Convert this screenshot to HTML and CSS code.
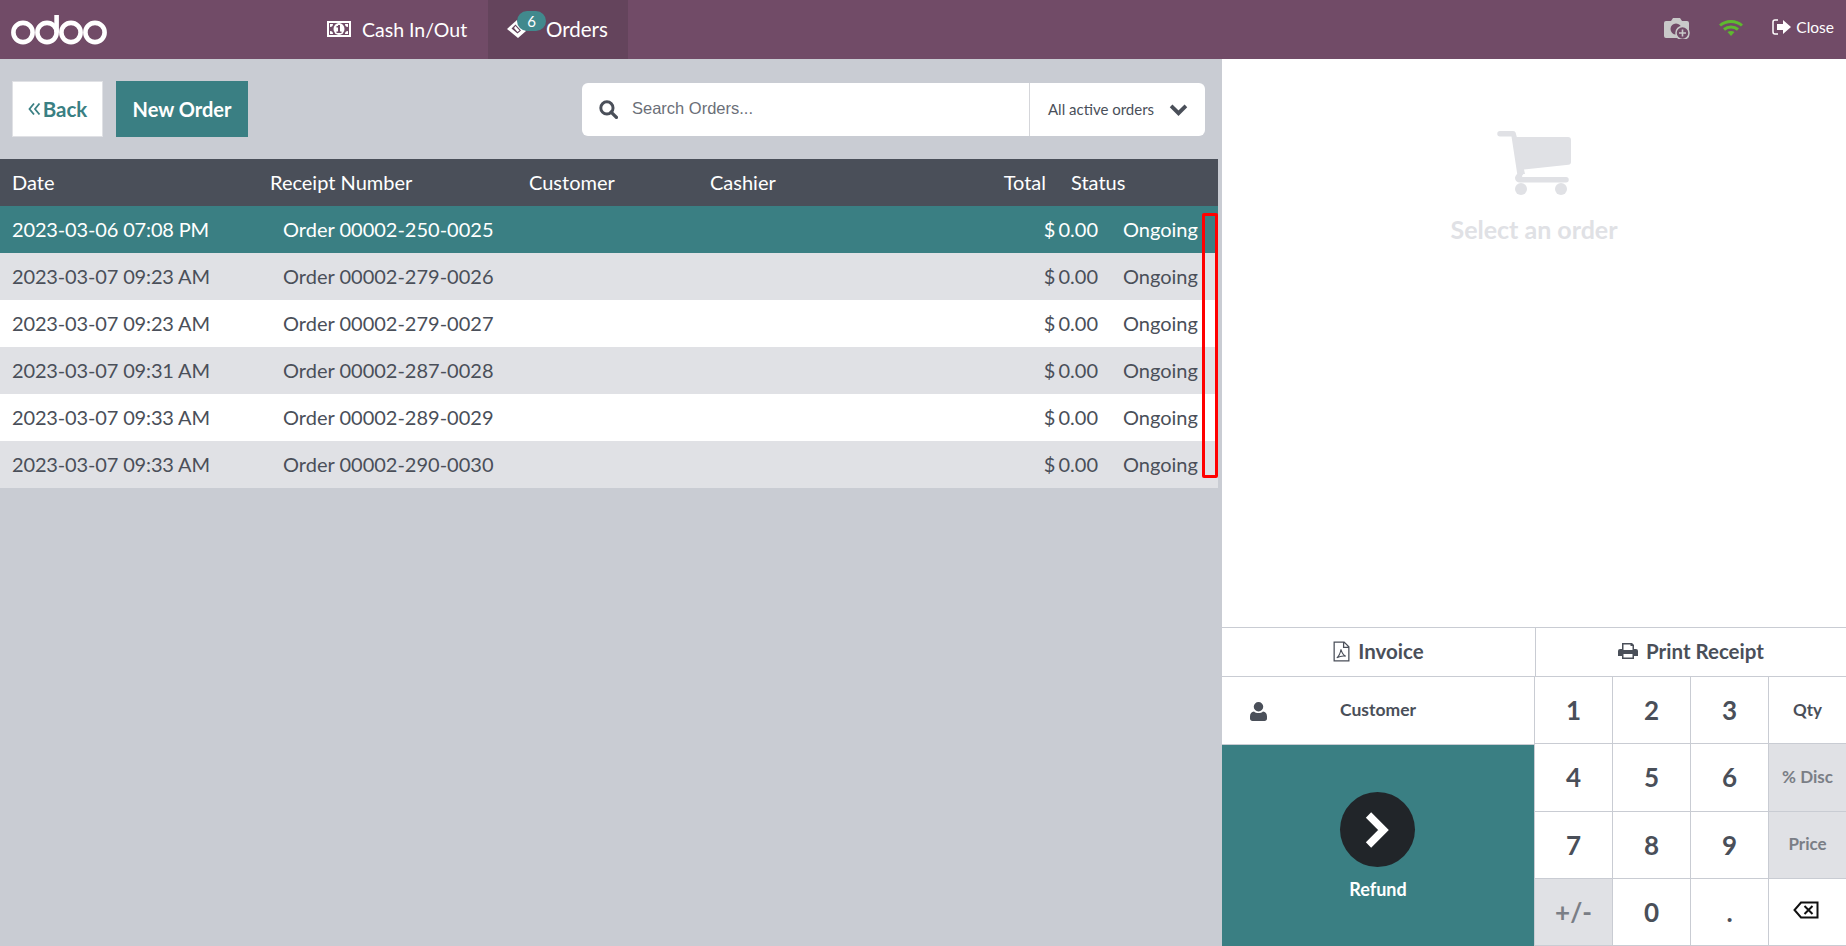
FILE: index.html
```html
<!DOCTYPE html>
<html lang="en">
<head>
    <meta charset="UTF-8">
    <title>Odoo POS - Orders</title>
    <link rel="stylesheet" href="styles.css">
</head>
<body>
    <header class="topbar">
        <div class="topbar-left">
            <svg class="logo" viewBox="0 0 96 36" width="96" height="36">
                <g fill="none" stroke="#fff" stroke-width="4.6">
                    <circle cx="12" cy="23.5" r="9.6"/>
                    <circle cx="36" cy="23.5" r="9.6"/>
                    <path d="M45.6 23.5V6"/>
                    <circle cx="60" cy="23.5" r="9.6"/>
                    <circle cx="84" cy="23.5" r="9.6"/>
                </g>
            </svg>
            <div class="tab cash-tab">
                <svg class="tab-icon" viewBox="0 0 24 16" width="24" height="16">
                    <path fill="#fff" fill-rule="evenodd" d="M0 0h24v16H0zM2 2v12h20V2z"/>
                    <ellipse cx="12" cy="8" rx="5.5" ry="6" fill="#fff"/>
                    <path fill="#fff" d="M3 3h3a3 3 0 0 1-3 3zM21 3v3a3 3 0 0 1-3-3zM3 13v-3a3 3 0 0 1 3 3zM21 13h-3a3 3 0 0 1 3-3z"/>
                    <path fill="#714b67" d="M11 4h2v8h-2zM9.500 5H11v1.500H9.500zM9.500 10.500h5V12h-5z"/>
                </svg>
                <span>Cash In/Out</span>
            </div>
            <div class="tab orders-tab">
                <svg class="tab-icon" viewBox="0 0 22 20" width="22" height="20">
                    <path fill="#fff" fill-rule="evenodd" d="M11 1l9 11-8 7-11-9zM9.500 5.500L5.500 9.500l6 5 3.500-3z"/>
                    <path fill="#fff" d="M9.500 7l4 4.500-2 1.500-3.500-4z"/>
                </svg>
                <span class="badge">6</span>
                <span>Orders</span>
            </div>
        </div>
        <div class="topbar-right">
            <svg class="status-icon" viewBox="0 0 26 22" width="26" height="22">
                <path fill="#c9c9c9" d="M2 4h5l2-3h7l2 3h5a2 2 0 0 1 2 2v13a2 2 0 0 1-2 2H2a2 2 0 0 1-2-2V6a2 2 0 0 1 2-2z"/>
                <circle cx="12" cy="12" r="5.500" fill="#714b67"/>
                <circle cx="18.500" cy="16" r="6.500" fill="#714b67" stroke="#c9c9c9" stroke-width="1.500"/>
                <path d="M18.500 12.500v7M15 16h7" stroke="#c9c9c9" stroke-width="1.600"/>
            </svg>
            <svg class="status-icon wifi" viewBox="0 0 24 18" width="24" height="18">
                <g fill="none" stroke="#5eb92f" stroke-width="3">
                    <path d="M1 6.500c6-5.500 16-5.500 22 0"/>
                    <path d="M5 10.500c4-3.500 10-3.500 14 0"/>
                </g>
                <path fill="#5eb92f" d="M8.500 13c2-1.500 5-1.500 7 0L12 17z"/>
            </svg>
            <div class="close-btn">
                <svg viewBox="0 0 20 16" width="20" height="16">
                    <path fill="none" stroke="#fff" stroke-width="1.500" d="M6 1H3a2 2 0 0 0-2 2v10a2 2 0 0 0 2 2h3"/>
                    <path fill="#fff" d="M5 5h6V1l8 7-8 7v-4H5z"/>
                </svg>
                <span>Close</span>
            </div>
        </div>
    </header>

    <main class="screen">
        <section class="orders-panel">
            <div class="controls">
                <div class="btn-group">
                    <button class="btn btn-back">
                        <svg viewBox="0 0 13 14" width="13" height="14">
                            <path d="M6 1.500L1.500 7 6 12.500M11.500 1.500L7 7l4.500 5.500" fill="none" stroke="#3a7f83" stroke-width="1.800"/>
                        </svg>
                        <span>Back</span>
                    </button>
                    <button class="btn btn-new">New Order</button>
                </div>
                <div class="search-box">
                    <svg class="search-icon" viewBox="0 0 18 18" width="19" height="19">
                        <circle cx="7.500" cy="7.500" r="5.800" fill="none" stroke="#4a4f59" stroke-width="2.800"/>
                        <path d="M11.500 11.500l5 5" stroke="#4a4f59" stroke-width="3.200" stroke-linecap="round"/>
                    </svg>
                    <input class="search-input" type="text" placeholder="Search Orders...">
                    <div class="filter">
                        <span>All active orders</span>
                        <svg viewBox="0 0 18 12" width="19" height="13">
                            <path d="M2 2.500l7 7 7-7" fill="none" stroke="#4a4f59" stroke-width="3.600"/>
                        </svg>
                    </div>
                </div>
            </div>

            <div class="orders-list">
                <div class="list-head">
                    <div>Date</div>
                    <div>Receipt Number</div>
                    <div>Customer</div>
                    <div>Cashier</div>
                    <div class="right">Total</div>
                    <div>Status</div>
                </div>
                <div class="order-row selected">
                    <div>2023-03-06 07:08 PM</div><div>Order 00002-250-0025</div><div></div><div></div><div class="right">$ 0.00</div><div>Ongoing</div>
                </div>
                <div class="order-row grey">
                    <div>2023-03-07 09:23 AM</div><div>Order 00002-279-0026</div><div></div><div></div><div class="right">$ 0.00</div><div>Ongoing</div>
                </div>
                <div class="order-row">
                    <div>2023-03-07 09:23 AM</div><div>Order 00002-279-0027</div><div></div><div></div><div class="right">$ 0.00</div><div>Ongoing</div>
                </div>
                <div class="order-row grey">
                    <div>2023-03-07 09:31 AM</div><div>Order 00002-287-0028</div><div></div><div></div><div class="right">$ 0.00</div><div>Ongoing</div>
                </div>
                <div class="order-row">
                    <div>2023-03-07 09:33 AM</div><div>Order 00002-289-0029</div><div></div><div></div><div class="right">$ 0.00</div><div>Ongoing</div>
                </div>
                <div class="order-row grey">
                    <div>2023-03-07 09:33 AM</div><div>Order 00002-290-0030</div><div></div><div></div><div class="right">$ 0.00</div><div>Ongoing</div>
                </div>
                <!-- annotation box from the screenshot -->
                <div class="highlight"></div>
            </div>
        </section>

        <aside class="side-panel">
            <div class="empty-order">
                <svg viewBox="0 0 76 66" width="76" height="66">
                    <path fill="#e0e1e5" d="M3 1h13c1.500 0 2.500.8 2.800 2.200l1 3.800H71a3 3 0 0 1 3 3v22c0 1.500-1 2.700-2.500 2.800L27 39.500l1 4.500h-1.600c-.5 1-1.400 1.500-1.400 2.200 0 .5.500.8 1 .8h43a2.700 2.700 0 0 1 0 5.500H23c-3 0-5-2-5-4.500 0-1.500 1.200-3 2.200-4.300L14.500 6.500H3a2.700 2.700 0 0 1 0-5.500z"/>
                    <circle cx="24" cy="59" r="6"/>
                    <circle cx="64" cy="59" r="6"/>
                </svg>
                <div class="empty-text">Select an order</div>
            </div>

            <div class="action-row">
                <div class="action">
                    <svg viewBox="0 0 16 20" width="17" height="21">
                        <path fill="none" stroke="#4a4f59" stroke-width="1.200" d="M1 1h9.500L15 5.500V19H1zM10 1v5h5"/>
                        <path fill="none" stroke="#4a4f59" stroke-width="1" d="M7.500 8c-.5 3-2 6.500-4 8 3-1.500 6-2 8.500-1.500-2-1-3.800-3.500-4.500-6.500z"/>
                    </svg>
                    <span>Invoice</span>
                </div>
                <div class="action">
                    <svg viewBox="0 0 20 18" width="20" height="18">
                        <path fill="#4a4f59" fill-rule="evenodd" d="M4 1h10l2 2v4h2a2 2 0 0 1 2 2v5h-4v3H4v-3H0V9a2 2 0 0 1 2-2h2zM5.500 2.500V8h9V4h-2V2.500zM5.500 12v3.500h9V12z"/>
                    </svg>
                    <span>Print Receipt</span>
                </div>
            </div>

            <div class="pads">
                <div class="left-pad">
                    <div class="customer-btn">
                        <svg viewBox="0 0 17 20" width="17" height="20">
                            <path fill="#4a4f59" d="M8.500 1a4.600 4.600 0 0 1 0 9.500 4.600 4.600 0 0 1 0-9.500zM4 10.500c1 1 2.800 1.500 4.500 1.500s3.500-.5 4.500-1.500c2.500.3 4 2 4 5v2c0 1.200-1 2.500-2.500 2.500h-12C1 20 0 18.700 0 17.500v-2c0-3 1.500-4.700 4-5z"/>
                        </svg>
                        <span>Customer</span>
                    </div>
                    <div class="pay-btn">
                        <div class="pay-circle">
                            <svg viewBox="0 0 26 38" width="26" height="38">
                                <path d="M4.500 4l15 15-15 15" fill="none" stroke="#fff" stroke-width="7.500"/>
                            </svg>
                        </div>
                        <span>Refund</span>
                    </div>
                </div>
                <div class="numpad">
                    <div class="key">1</div><div class="key">2</div><div class="key">3</div><div class="key mode">Qty</div>
                    <div class="key">4</div><div class="key">5</div><div class="key">6</div><div class="key mode off">% Disc</div>
                    <div class="key">7</div><div class="key">8</div><div class="key">9</div><div class="key mode off">Price</div>
                    <div class="key off">+/-</div><div class="key">0</div><div class="key">.</div>
                    <div class="key">
                        <svg class="backspace" viewBox="0 0 26 18" width="26" height="18">
                            <path fill="none" stroke="#111" stroke-width="2" d="M8 1.500h16.500v15H8L1.500 9z"/>
                            <path stroke="#111" stroke-width="2" d="M11.500 5l8 8M19.500 5l-8 8"/>
                        </svg>
                    </div>
                </div>
            </div>
        </aside>
    </main>
</body>
</html>
```

FILE: styles.css
```css
* {
    box-sizing: border-box;
}

html, body {
    height: 100%;
}

body {
    margin: 0;
    font-family: 'Lato', sans-serif;
    color: #4a4f59;
    overflow: hidden;
    display: flex;
    flex-direction: column;
}

/* top bar */
.topbar {
    height: 59px;
    background-color: #714b67;
    color: #fff;
    display: flex;
    justify-content: space-between;
    flex: none;
}

.topbar-left {
    display: flex;
    align-items: stretch;
}

.logo {
    margin: 9px 0 0 11px;
}

.tab {
    display: flex;
    align-items: center;
    height: 59px;
    padding-bottom: 1px;
}

.cash-tab {
    margin-left: 220px;
    width: 161px;
    gap: 11px;
    font-size: 19.5px;
}

.orders-tab {
    position: relative;
    width: 140px;
    background-color: #64445c;
    padding-left: 18px;
    gap: 18px;
    font-size: 20.5px;
}

.badge {
    position: absolute;
    left: 29px;
    top: 11px;
    width: 29px;
    height: 20px;
    border-radius: 10px;
    background-color: #41898d;
    color: #fff;
    font-size: 15px;
    line-height: 20px;
    text-align: center;
}

.topbar-right {
    display: flex;
    align-items: center;
    padding: 0 12px 3px 0;
}

.status-icon {
    margin-right: 29px;
}

.wifi {
    margin-right: 29px;
}

.close-btn {
    display: flex;
    align-items: center;
    gap: 4px;
    font-size: 15.5px;
    margin-bottom: 2px;
}

/* main layout */
.screen {
    flex: 1;
    display: flex;
    min-height: 0;
}

.orders-panel {
    width: 1222px;
    background-color: #c9ccd3;
    padding-right: 4px;
}

.controls {
    height: 100px;
    display: flex;
    justify-content: space-between;
    padding: 22px 13px 0 12px;
}

.btn-group {
    display: flex;
    gap: 13px;
    height: 56px;
}

.btn {
    font-family: 'Lato', sans-serif;
    font-size: 20px;
    font-weight: 700;
    border: 1px solid #e0e1e5;
    padding: 0;
}

.btn-back {
    width: 91px;
    background-color: #fff;
    color: #3a7f83;
    display: flex;
    align-items: center;
    justify-content: center;
    gap: 2px;
    font-size: 20.5px;
}

.btn-new {
    width: 132px;
    background-color: #3a7f83;
    border-color: #3a7f83;
    color: #fff;
}

.search-box {
    width: 623px;
    height: 53px;
    margin-top: 2px;
    background-color: #fff;
    border-radius: 6px;
    display: flex;
    align-items: center;
}

.search-icon {
    margin-left: 17px;
    flex: none;
}

.search-input {
    flex: 1;
    min-width: 0;
    border: none;
    outline: none;
    margin-left: 6px;
    padding: 0 8px 3px;
    font-family: 'Liberation Sans', sans-serif;
    font-size: 16.5px;
    background: transparent;
}

.search-input::placeholder {
    color: #6b6f78;
    opacity: 1;
}

.filter {
    width: 176px;
    height: 100%;
    border-left: 1px solid #d5d6da;
    display: flex;
    align-items: center;
    padding: 0 0 1px 18px;
    gap: 15px;
    font-size: 15px;
}

/* orders list */
.orders-list {
    position: relative;
    font-size: 20px;
}

.list-head,
.order-row {
    display: grid;
    align-items: center;
    padding: 0 0 2px 12px;
}

.list-head {
    height: 47px;
    grid-template-columns: 258px 259px 181px 270px 66px 1fr;
    background-color: #4a4f59;
    color: #fff;
}

.order-row {
    height: 47px;
    grid-template-columns: 271px 259px 181px 300px 75px 1fr;
    background-color: #fff;
}

.order-row > div:first-child {
    letter-spacing: -0.15px;
}

.list-head .right,
.order-row .right {
    text-align: right;
}

.order-row .right {
    word-spacing: -2px;
}

.list-head > div:last-child,
.order-row > div:last-child {
    padding-left: 25px;
    white-space: nowrap;
}

.order-row.grey {
    background-color: #e0e1e5;
}

.order-row.selected {
    background-color: #3a7f83;
    color: #fff;
}

.highlight {
    position: absolute;
    left: 1202px;
    top: 54px;
    width: 16px;
    height: 265px;
    border: 3px solid #f00;
    border-radius: 2px;
}

/* right side */
.side-panel {
    width: 624px;
    display: flex;
    flex-direction: column;
    background-color: #fff;
}

.empty-order {
    flex: 1;
    display: flex;
    flex-direction: column;
    align-items: center;
    padding: 71px 0 0 2px;
    color: #e0e1e5;
}

.empty-order svg {
    fill: #e0e1e5;
}

.empty-text {
    margin: 18px 2px 0 0;
    font-size: 25px;
    font-weight: 700;
}

.action-row {
    height: 50px;
    display: flex;
    flex: none;
    border-top: 1px solid #c9ccd3;
    border-bottom: 1px solid #c9ccd3;
}

.action {
    flex: 1;
    display: flex;
    align-items: center;
    justify-content: center;
    gap: 8px;
    padding-bottom: 2px;
    font-size: 20.5px;
    font-weight: 700;
}

.action:first-child {
    border-right: 1px solid #c9ccd3;
    flex: none;
    width: 314px;
}

.pads {
    height: 269px;
    flex: none;
    display: flex;
}

.left-pad {
    width: 312px;
    flex: none;
    display: flex;
    flex-direction: column;
}

.customer-btn {
    height: 68px;
    position: relative;
    display: flex;
    align-items: center;
    justify-content: center;
    padding-bottom: 3px;
    font-size: 17.5px;
    font-weight: 700;
    border-bottom: 1px solid #c9ccd3;
}

.customer-btn svg {
    position: absolute;
    left: 28px;
    top: 24px;
}

.pay-btn {
    flex: 1;
    background-color: #3a7f83;
    color: #fff;
    display: flex;
    flex-direction: column;
    align-items: center;
    padding-top: 47px;
    font-size: 18px;
    font-weight: 700;
}

.pay-circle {
    width: 75px;
    height: 75px;
    margin: 0 2px 11px 0;
    border-radius: 50%;
    background-color: #212529;
    display: flex;
    align-items: center;
    justify-content: center;
}

.numpad {
    flex: 1;
    display: grid;
    grid-template-columns: repeat(4, 1fr);
    grid-template-rows: repeat(4, 1fr);
}

.key {
    border-left: 1px solid #c9ccd3;
    border-bottom: 1px solid #c9ccd3;
    display: flex;
    align-items: center;
    justify-content: center;
    font-size: 26px;
    font-weight: 700;
}

.key.mode {
    font-size: 17px;
    font-weight: 700;
    padding-bottom: 2px;
}

.key.off {
    background-color: #e0e1e5;
    color: #7a7e86;
}

.backspace {
    margin: 0 3px 3px 0;
}
```
